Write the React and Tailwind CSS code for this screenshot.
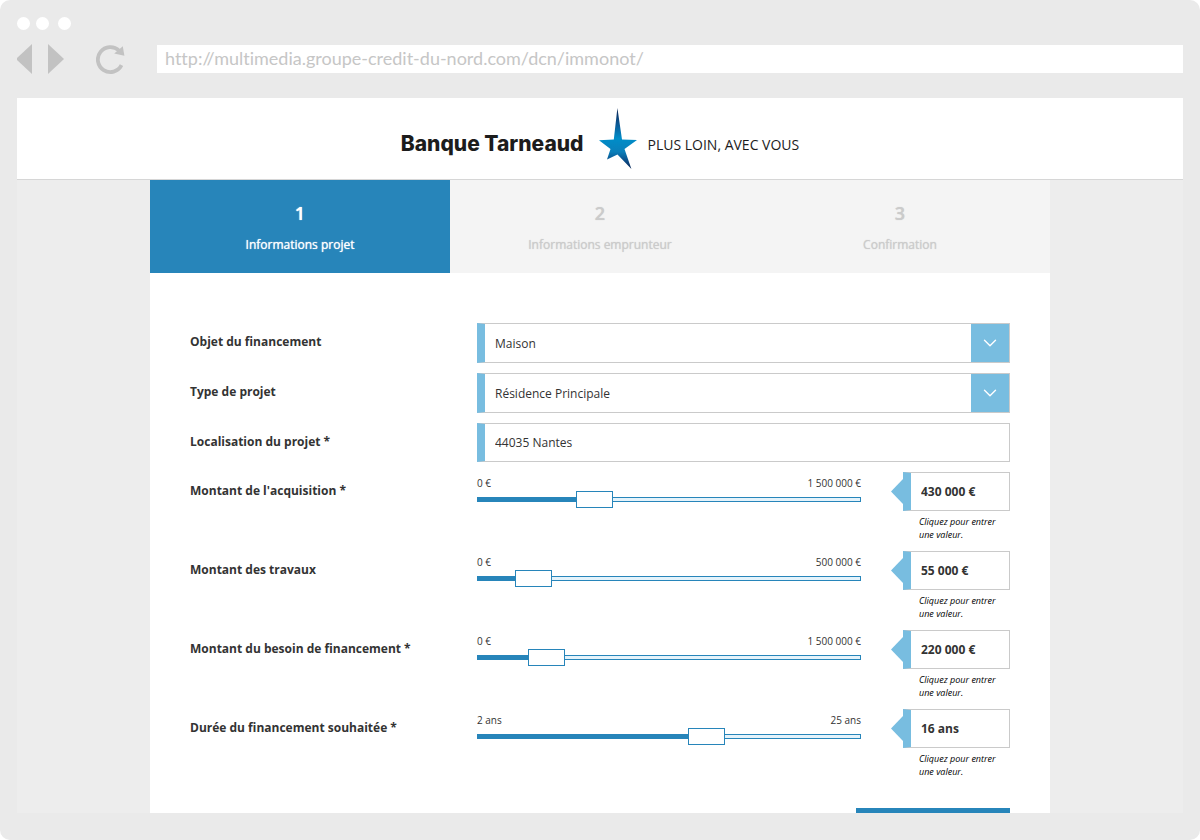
import React, { useState } from "react";
import { ChevronDown } from "lucide-react";
import clsx from "clsx";

const STEPS = ["Informations projet", "Informations emprunteur", "Confirmation"];

const SLIDERS = [
  {
    id: "acquisition",
    label: "Montant de l'acquisition *",
    min: 0,
    max: 1500000,
    step: 5000,
    unit: "€",
    initial: 430000,
  },
  {
    id: "travaux",
    label: "Montant des travaux",
    min: 0,
    max: 500000,
    step: 5000,
    unit: "€",
    initial: 55000,
  },
  {
    id: "besoin",
    label: "Montant du besoin de financement *",
    min: 0,
    max: 1500000,
    step: 5000,
    unit: "€",
    initial: 220000,
  },
  {
    id: "duree",
    label: "Durée du financement souhaitée *",
    min: 2,
    max: 25,
    step: 1,
    unit: "ans",
    initial: 16,
  },
];

const fieldClass =
  "w-full border border-l-8 border-[#cacaca] border-l-[#78bde0] bg-white " +
  "pl-[10px] text-xs text-[#333] focus:outline-none";

const labelClass = "w-[35%] shrink-0 pt-[10px] text-xs leading-[18px] font-bold text-[#333]";

const rangeClass =
  "block h-[17px] w-full cursor-pointer appearance-none bg-transparent " +
  "[&::-webkit-slider-runnable-track]:h-[5px] " +
  "[&::-webkit-slider-runnable-track]:bg-[linear-gradient(to_right,#2785ba_var(--fill),#e4f3fb_var(--fill))] " +
  "[&::-webkit-slider-runnable-track]:shadow-[inset_0_0_0_1px_#2785ba] " +
  "[&::-webkit-slider-thumb]:-mt-[6px] [&::-webkit-slider-thumb]:box-border " +
  "[&::-webkit-slider-thumb]:h-[17px] [&::-webkit-slider-thumb]:w-[37px] " +
  "[&::-webkit-slider-thumb]:appearance-none [&::-webkit-slider-thumb]:border " +
  "[&::-webkit-slider-thumb]:border-[#2785ba] [&::-webkit-slider-thumb]:bg-white";

const formatValue = (n, unit) =>
  `${String(n).replace(/\B(?=(\d{3})+$)/g, " ")} ${unit}`;

function ReloadIcon() {
  return (
    <svg width="29" height="29" viewBox="0 0 29 29" aria-hidden="true">
      <path
        d="M25.5 20.2A12.5 12.5 0 1 1 23 5.5"
        fill="none"
        stroke="#c2c2c2"
        strokeWidth="3.8"
      />
      <path d="M26.8 1.2 28.4 10.8 18.2 8.4Z" fill="#c2c2c2" />
    </svg>
  );
}

function BrowserBar() {
  return (
    <div className="px-[17px] pt-[17px] pb-[25px]">
      <div className="flex">
        <span className="size-[13px] rounded-full bg-white" />
        <span className="ml-[6px] size-[13px] rounded-full bg-white" />
        <span className="ml-[9px] size-[13px] rounded-full bg-white" />
      </div>

      <div className="mt-[15px] flex h-7 items-center">
        <button aria-label="Précédent" className="shrink-0">
          <svg width="15" height="30" viewBox="0 0 15 30" fill="#c2c2c2">
            <path d="M15 0V30L-1 15Z" />
          </svg>
        </button>
        <button aria-label="Suivant" className="ml-4 shrink-0">
          <svg width="16" height="30" viewBox="0 0 16 30" fill="#c2c2c2">
            <path d="M0 0V30L16 15Z" />
          </svg>
        </button>
        <button aria-label="Actualiser" className="ml-8 shrink-0">
          <ReloadIcon />
        </button>
        <input
          aria-label="Adresse"
          className="ml-8 h-7 min-w-0 flex-1 bg-white px-2 pb-[2px] font-['Lato',sans-serif] text-lg text-[#c6c6c6] [font-variant-ligatures:none] focus:outline-none"
          defaultValue="http://multimedia.groupe-credit-du-nord.com/dcn/immonot/"
        />
      </div>
    </div>
  );
}

function Logo() {
  return (
    <div className="flex items-center">
      <span className="pt-[10px] font-['Inter',sans-serif] text-[21px] font-extrabold text-[#1c1c1c]">
        Banque Tarneaud
      </span>
      <svg className="ml-[14px]" width="40" height="61" viewBox="0 0 40 61" aria-hidden="true">
        <defs>
          <linearGradient id="star" x1="0" y1="0" x2="0" y2="1">
            <stop offset="0" stopColor="#0b2554" />
            <stop offset="0.28" stopColor="#0b5a97" />
            <stop offset="0.5" stopColor="#008dc8" />
            <stop offset="0.72" stopColor="#0a7fba" />
            <stop offset="0.86" stopColor="#0b4f8a" />
            <stop offset="1" stopColor="#0b2554" />
          </linearGradient>
        </defs>
        <path
          d="M19.4 0 24 31.5 39 32 26.5 41 33.4 61 19.5 46.5 9 51.5 12.5 41 1 32.2 15.8 31.5Z"
          fill="url(#star)"
        />
      </svg>
      <span className="ml-[10px] pt-3 text-sm text-[#1c1c1c]">
        PLUS LOIN, AVEC VOUS
      </span>
    </div>
  );
}

function SelectRow({ id, label, options }) {
  return (
    <div className="flex">
      <label htmlFor={id} className={labelClass}>
        {label}
      </label>
      <div className="relative flex-1">
        <select id={id} className={clsx(fieldClass, "block h-10 appearance-none pt-[2px]")}>
          {options.map((o) => (
            <option key={o}>{o}</option>
          ))}
        </select>
        <span className="pointer-events-none absolute inset-y-px right-px flex w-[38px] items-center justify-center bg-[#78bde0] text-white">
          <ChevronDown size={22} strokeWidth={1.5} />
        </span>
      </div>
    </div>
  );
}

function SliderRow({ id, label, min, max, step, unit, initial }) {
  const [value, setValue] = useState(initial);
  const fill = ((value - min) / (max - min)) * 100;

  return (
    <div className="flex h-[69px]">
      <label htmlFor={id} className={labelClass}>
        {label}
      </label>
      <div className="flex flex-1">
        {/* SLIDER */}
        <div className="flex-1 pt-1">
          <div className="flex justify-between text-[10px] leading-[15px] text-[#333]">
            <span>{formatValue(min, unit)}</span>
            <span>{formatValue(max, unit)}</span>
          </div>
          <input
            id={id}
            type="range"
            className={rangeClass}
            min={min}
            max={max}
            step={step}
            value={value}
            onChange={(e) => setValue(Number(e.target.value))}
            style={{ "--fill": `${fill}%` }}
          />
        </div>

        {/* VALUE */}
        <div className="ml-[30px] flex items-start">
          <span className="mt-[7px] h-[25px] w-3 bg-[#78bde0] [clip-path:polygon(100%_0,100%_100%,0_50%)]" />
          <div className="w-[107px]">
            <input
              aria-label={label}
              className={clsx(fieldClass, "block h-[39px] font-bold")}
              value={formatValue(value, unit)}
              onChange={(e) => {
                const n = Number(e.target.value.replace(/\D/g, ""));
                setValue(Math.min(max, Math.max(min, n)));
              }}
            />
            <p className="pt-1 pl-4 text-[9px] leading-[13px] text-black italic">
              Cliquez pour entrer une valeur.
            </p>
          </div>
        </div>
      </div>
    </div>
  );
}

export default function App() {
  const [active, setActive] = useState(0);

  return (
    <div className="flex h-screen flex-col overflow-hidden rounded-[10px] bg-[#eaeaea] font-['Open_Sans',sans-serif]">
      <BrowserBar />

      <div className="mx-[17px] mb-[27px] flex-1 overflow-y-auto bg-[#ededed] [scrollbar-width:none]">
        <header className="flex h-[82px] justify-center border-b border-[#d6d6d6] bg-white pt-[10px] pb-[10px]">
          <Logo />
        </header>

        <main className="mx-auto max-w-[900px] bg-white">
          {/* ================= STEPS ================= */}
          <nav className="grid grid-cols-3">
            {STEPS.map((step, i) => (
              <button
                key={step}
                onClick={() => setActive(i)}
                className={clsx(
                  "flex h-[93px] flex-col items-center pt-[21px] [text-shadow:0_0_1px_currentColor]",
                  i === active ? "bg-[#2785ba] text-white" : "bg-[#f4f4f4] text-[#cbcbcb]"
                )}
              >
                <span className="text-lg leading-6 font-semibold">{i + 1}</span>
                <span className="mt-[11px] text-xs leading-[18px]">{step}</span>
              </button>
            ))}
          </nav>

          {/* ================= FORM ================= */}
          <form
            className="flex flex-col gap-[10px] px-10 pt-[50px] pb-10"
            onSubmit={(e) => e.preventDefault()}
          >
            <SelectRow
              id="objet"
              label="Objet du financement"
              options={["Maison", "Appartement", "Terrain"]}
            />
            <SelectRow
              id="type"
              label="Type de projet"
              options={["Résidence Principale", "Résidence Secondaire"]}
            />
            <div className="flex">
              <label htmlFor="localisation" className={labelClass}>
                Localisation du projet *
              </label>
              <div className="flex-1">
                <input
                  id="localisation"
                  className={clsx(fieldClass, "block h-[39px]")}
                  defaultValue="44035 Nantes"
                />
              </div>
            </div>

            {SLIDERS.map((s) => (
              <SliderRow key={s.id} {...s} />
            ))}

            <button
              type="submit"
              aria-label="Étape suivante"
              className="mt-5 h-10 w-[154px] self-end bg-[#2785ba]"
            />
          </form>
        </main>
      </div>
    </div>
  );
}
